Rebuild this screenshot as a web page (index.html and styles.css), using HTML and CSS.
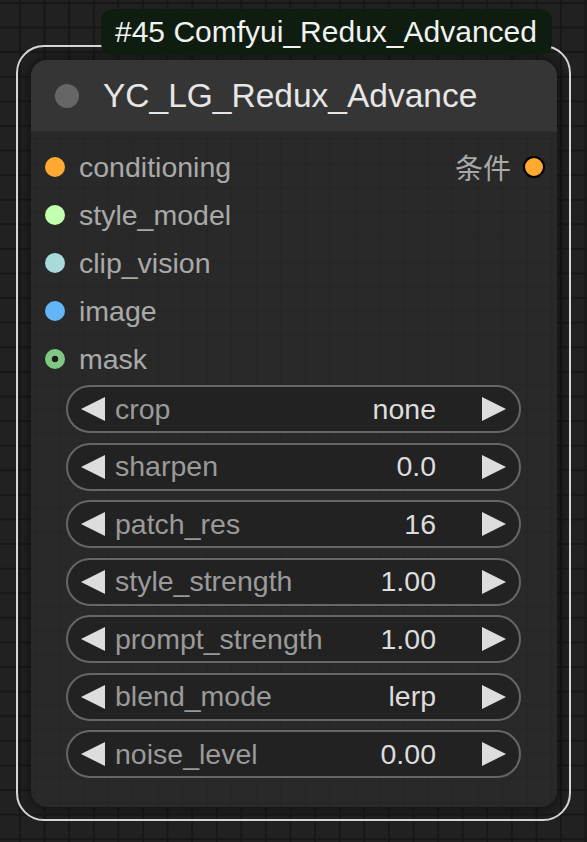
FILE: index.html
```html
<!DOCTYPE html>
<html>
<head>
<meta charset="utf-8">
<link rel="stylesheet" href="styles.css">
</head>
<body>
<div class="canvas">
  <div class="selection">
    <div class="badge">#45 Comfyui_Redux_Advanced</div>
    <div class="node">
      <div class="title">
        <span class="title-dot"></span>
        <span class="title-text">YC_LG_Redux_Advance</span>
      </div>
      <div class="slots">
        <div class="slot">
          <span class="dot c-cond"></span>
          <span class="slot-label">conditioning</span>
          <span class="out">
            <span class="out-label">条件</span>
            <span class="dot out-dot c-cond"></span>
          </span>
        </div>
        <div class="slot"><span class="dot c-style"></span><span class="slot-label">style_model</span></div>
        <div class="slot"><span class="dot c-clip"></span><span class="slot-label">clip_vision</span></div>
        <div class="slot"><span class="dot c-image"></span><span class="slot-label">image</span></div>
        <div class="slot"><span class="dot c-mask"></span><span class="slot-label">mask</span></div>
      </div>
      <div class="widgets">
        <div class="widget"><span class="arrow left"></span><span class="w-label">crop</span><span class="w-value">none</span><span class="arrow right"></span></div>
        <div class="widget"><span class="arrow left"></span><span class="w-label">sharpen</span><span class="w-value">0.0</span><span class="arrow right"></span></div>
        <div class="widget"><span class="arrow left"></span><span class="w-label">patch_res</span><span class="w-value">16</span><span class="arrow right"></span></div>
        <div class="widget"><span class="arrow left"></span><span class="w-label">style_strength</span><span class="w-value">1.00</span><span class="arrow right"></span></div>
        <div class="widget"><span class="arrow left"></span><span class="w-label">prompt_strength</span><span class="w-value">1.00</span><span class="arrow right"></span></div>
        <div class="widget"><span class="arrow left"></span><span class="w-label">blend_mode</span><span class="w-value">lerp</span><span class="arrow right"></span></div>
        <div class="widget"><span class="arrow left"></span><span class="w-label">noise_level</span><span class="w-value">0.00</span><span class="arrow right"></span></div>
      </div>
    </div>
  </div>
</div>
</body>
</html>
```
FILE: styles.css
```css
html, body {
  margin: 0;
  padding: 0;
}
body {
  width: 587px;
  height: 842px;
  overflow: hidden;
  background-color: #212121;
  background-image:
    linear-gradient(to right, #171717 0, #171717 2px, transparent 2px),
    linear-gradient(to bottom, #171717 0, #171717 2px, transparent 2px);
  background-size: 24.6px 24.6px;
  background-position: 19px 2px;
  font-family: "Liberation Sans", Arial, sans-serif;
}
.canvas {
  padding: 45px 0 0 16px;
}
.selection {
  position: relative;
  width: 555px;
  height: 776px;
  box-sizing: border-box;
  border: 2px solid #d6d6d6;
  border-radius: 28px;
  padding: 13px 12px 12px 13px;
}
.badge {
  position: absolute;
  left: 83px;
  top: -38px;
  width: 451px;
  height: 46px;
  box-sizing: border-box;
  background: #0e1d0f;
  border-radius: 12px;
  color: #f2f2f2;
  font-size: 30px;
  line-height: 46px;
  padding-left: 14px;
  white-space: nowrap;
}
.node {
  width: 526px;
  height: 747px;
  border-radius: 16px;
  background-color: #292929;
  background-image:
    linear-gradient(to right, rgba(0,0,0,0.06) 0, rgba(0,0,0,0.06) 2px, transparent 2px),
    linear-gradient(to bottom, rgba(0,0,0,0.06) 0, rgba(0,0,0,0.06) 2px, transparent 2px);
  background-size: 24.6px 24.6px;
  background-position: 3px 4px;
  box-shadow: 0 0 10px 4px rgba(0,0,0,0.35);
  overflow: hidden;
}
.title {
  height: 72px;
  background: #353535;
  display: flex;
  align-items: center;
  border-bottom: 1px solid #2e2e2e;
  box-sizing: border-box;
}
.title-dot {
  width: 24px;
  height: 24px;
  border-radius: 50%;
  background: #666;
  margin-left: 24px;
  flex: none;
}
.title-text {
  margin-left: 24px;
  font-size: 33.5px;
  color: #e6e6e6;
  white-space: nowrap;
}
.slots {
  padding-top: 11px;
}
.slot {
  height: 48px;
  display: flex;
  align-items: center;
}
.dot {
  width: 20px;
  height: 20px;
  border-radius: 50%;
  margin-left: 14px;
  flex: none;
  box-sizing: border-box;
}
.c-cond { background: #ffa931; }
.c-style { background: #c2ffae; }
.c-clip { background: #a8dadc; }
.c-image { background: #64b5f6; }
.c-mask {
  background: radial-gradient(circle, #1c1c1c 0, #1c1c1c 3px, #81c784 3.6px);
}
.slot-label {
  margin-left: 14px;
  font-size: 28.5px;
  color: #a9a9a9;
  white-space: nowrap;
}
.out {
  margin-left: auto;
  display: flex;
  align-items: center;
  margin-right: 12px;
}
.out-label {
  font-family: "Noto Sans CJK SC", "Liberation Sans", sans-serif;
  font-size: 28px;
  color: #a9a9a9;
}
.out-dot {
  width: 22px;
  height: 22px;
  margin-left: 12px;
  border: 2px solid #000;
}
.widgets {
  padding: 2px 36px 0 35px;
  display: flex;
  flex-direction: column;
  gap: 9.5px;
}
.widget {
  height: 48px;
  box-sizing: border-box;
  border: 2px solid #666;
  border-radius: 24px;
  background: #222;
  display: flex;
  align-items: center;
  font-size: 28.5px;
  white-space: nowrap;
}
.arrow {
  width: 0;
  height: 0;
  border-top: 12px solid transparent;
  border-bottom: 12px solid transparent;
  flex: none;
}
.arrow.left {
  border-right: 24px solid #ddd;
  margin-left: 13px;
}
.arrow.right {
  border-left: 24px solid #ddd;
  margin-right: 13px;
}
.w-label {
  margin-left: 10px;
  color: #9a9a9a;
}
.w-value {
  margin-left: auto;
  margin-right: 46px;
  color: #dddddd;
}
```
